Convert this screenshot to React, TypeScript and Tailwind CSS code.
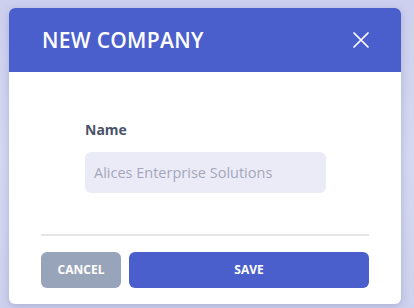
import React from "react";

export default function App() {
  return (
    <div
      className="w-[414px] h-[308px] bg-gradient-to-b from-[#cdd0ee] via-[#d6d9f1] to-[#cfd2ee] pt-2 px-[9px] overflow-hidden"
      style={{ fontFamily: '"Open Sans", "Noto Sans", sans-serif' }}
    >
      <div className="w-[392px] h-[296px] bg-white rounded-md shadow-[0_2px_8px_rgba(60,70,140,0.25)] overflow-hidden flex flex-col">
        {/* Header */}
        <div className="h-16 bg-[#4a5fcc] flex items-center justify-between pl-[33px] pr-[31px]">
          <h2 className="text-[21px] font-semibold text-white tracking-[0.3px] leading-none">
            NEW COMPANY
          </h2>
          <button className="text-white">
            <svg width="18" height="18" viewBox="0 0 18 18" fill="none">
              <path d="M2 2L16 16M16 2L2 16" stroke="white" strokeWidth="1.7" strokeLinecap="round" />
            </svg>
          </button>
        </div>

        {/* Body */}
        <div className="flex-1 flex flex-col px-8">
          <div className="pt-[51px] pl-[44px]">
            <label className="block text-[14px] font-bold text-[#4a5268] leading-none">
              Name
            </label>
            <input
              type="text"
              placeholder="Alices Enterprise Solutions"
              className="mt-[15px] w-[241px] h-[41px] rounded-md bg-[#ebebf8] px-[9px] text-[14.5px] text-[#4a5268] placeholder:text-[#a4a7b8] outline-none"
            />
          </div>

          <div className="mt-[41px] border-t-2 border-[#e6e6ea]" />

          <div className="flex gap-2 mt-[16px]">
            <button className="w-20 h-9 rounded-md bg-[#98a4ba] text-white text-[12px] font-bold">
              CANCEL
            </button>
            <button className="flex-1 h-9 rounded-md bg-[#4a5fcc] text-white text-[12px] font-bold">
              SAVE
            </button>
          </div>
        </div>
      </div>
    </div>
  );
}
